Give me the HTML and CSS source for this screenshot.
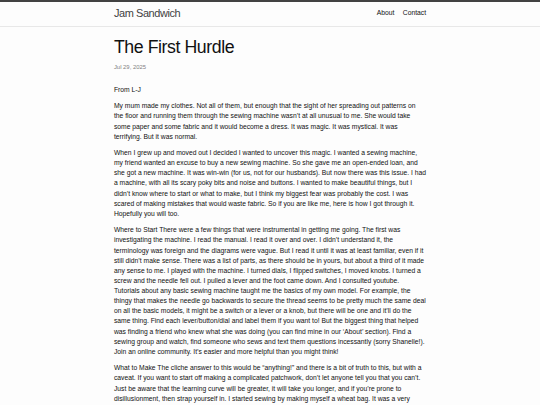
FILE: index.html
```
<!DOCTYPE html>
<html lang="en">
<head>
<meta charset="utf-8">
<title>The First Hurdle | Jam Sandwich</title>
<link rel="stylesheet" href="styles.css">
</head>
<body>
<header class="site-header">
  <div class="wrapper header-inner">
    <a class="site-title" href="#">Jam Sandwich</a>
    <nav class="site-nav">
      <a class="page-link" href="#">About</a>
      <a class="page-link" href="#">Contact</a>
    </nav>
  </div>
</header>
<main class="page-content">
  <div class="wrapper">
    <article class="post">
      <header class="post-header">
        <h1 class="post-title">The First Hurdle</h1>
        <p class="post-meta"><time>Jul 29, 2025</time></p>
      </header>
      <div class="post-content">
        <p>From L-J</p>
        <p>My mum made my clothes. Not all of them, but enough that the sight of her spreading out patterns on the floor and running them through the sewing machine wasn’t at all unusual to me. She would take some paper and some fabric and it would become a dress. It was magic. It was mystical. It was terrifying. But it was normal.</p>
        <p>When I grew up and moved out I decided I wanted to uncover this magic. I wanted a sewing machine, my friend wanted an excuse to buy a new sewing machine. So she gave me an open-ended loan, and she got a new machine. It was win-win (for us, not for our husbands). But now there was this issue. I had a machine, with all its scary poky bits and noise and buttons. I wanted to make beautiful things, but I didn’t know where to start or what to make, but I think my biggest fear was probably the cost. I was scared of making mistakes that would waste fabric. So if you are like me, here is how I got through it. Hopefully you will too.</p>
        <p>Where to Start There were a few things that were instrumental in getting me going. The first was investigating the machine. I read the manual. I read it over and over. I didn’t understand it, the terminology was foreign and the diagrams were vague. But I read it until it was at least familiar, even if it still didn’t make sense. There was a list of parts, as there should be in yours, but about a third of it made any sense to me. I played with the machine. I turned dials, I flipped switches, I moved knobs. I turned a screw and the needle fell out. I pulled a lever and the foot came down. And I consulted youtube. Tutorials about any basic sewing machine taught me the basics of my own model. For example, the thingy that makes the needle go backwards to secure the thread seems to be pretty much the same deal on all the basic models, it might be a switch or a lever or a knob, but there will be one and it’ll do the same thing. Find each lever/button/dial and label them if you want to! But the biggest thing that helped was finding a friend who knew what she was doing (you can find mine in our ‘About’ section). Find a sewing group and watch, find someone who sews and text them questions incessantly (sorry Shanelle!). Join an online community. It’s easier and more helpful than you might think!</p>
        <p>What to Make The cliche answer to this would be “anything!” and there is a bit of truth to this, but with a caveat. If you want to start off making a complicated patchwork, don’t let anyone tell you that you can’t. Just be aware that the learning curve will be greater, it will take you longer, and if you’re prone to disillusionment, then strap yourself in. I started sewing by making myself a wheat bag. It was a very simple project, and it taught me a lot.</p>
      </div>
    </article>
  </div>
</main>
</body>
</html>
```
FILE: styles.css
```
html, body {
  margin: 0;
  padding: 0;
}

body {
  background: #fdfdfd;
  color: #111111;
  font-family: "Liberation Sans", Arial, Helvetica, sans-serif;
  font-size: 6.75px;
  line-height: 1.5;
  font-weight: 400;
}

a {
  text-decoration: none;
}

.wrapper {
  max-width: 312.19px;
  margin: 0 auto;
  padding: 0 12.66px;
}

.site-header {
  border-top: 2.11px solid #424242;
  border-bottom: 0.5px solid #e8e8e8;
  min-height: 23.6px;
}

.header-inner {
  display: flex;
  justify-content: space-between;
  align-items: flex-start;
}

.site-title {
  font-size: 10.97px;
  font-weight: 300;
  line-height: 22.78px;
  letter-spacing: -0.42px;
  color: #424242;
}

.site-nav {
  display: flex;
  gap: 8.44px;
  line-height: 22.78px;
}

.page-link {
  color: #111111;
  font-size: 6.75px;
}

.page-content {
  padding: 12.66px 0;
}

.post-header {
  margin-bottom: 12.66px;
}

.post-title {
  margin: 0 0 6.33px;
  font-size: 17.72px;
  font-weight: 400;
  line-height: 1;
  letter-spacing: -0.42px;
}

.post-meta {
  margin: 0;
  font-size: 5.9px;
  color: #828282;
}

.post-content p {
  margin: 0 0 6.33px;
}
```
